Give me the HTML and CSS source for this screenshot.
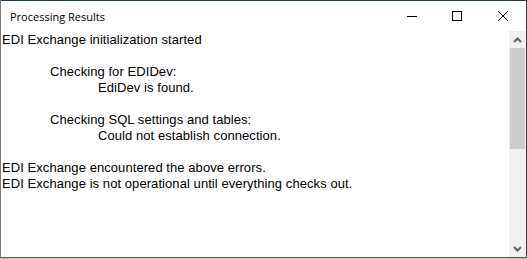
FILE: index.html
```html
<!DOCTYPE html>
<html lang="en">
<head>
  <meta charset="UTF-8">
  <title>Processing Results</title>
  <link rel="stylesheet" href="styles.css">
</head>
<body>

  <div class="window">
    <div class="title-bar">
      <div class="title">Processing Results</div>
      <div class="controls">
        <div class="control">
          <svg width="10" height="10" viewBox="0 0 10 10"><path d="M0 5.5H10" stroke="#000" stroke-width="1"/></svg>
        </div>
        <div class="control">
          <svg width="10" height="10" viewBox="0 0 10 10"><rect x="0.5" y="0.5" width="9" height="9" fill="none" stroke="#000" stroke-width="1"/></svg>
        </div>
        <div class="control">
          <svg width="10" height="10" viewBox="0 0 10 10"><path d="M0 0L10 10M10 0L0 10" stroke="#000" stroke-width="1"/></svg>
        </div>
      </div>
    </div>

    <div class="content">
      <div class="results">
        <div class="line">EDI Exchange initialization started</div>
        <div class="line">&nbsp;</div>
        <div class="line indent-1">Checking for EDIDev:</div>
        <div class="line indent-2">EdiDev is found.</div>
        <div class="line">&nbsp;</div>
        <div class="line indent-1">Checking SQL settings and tables:</div>
        <div class="line indent-2">Could not establish connection.</div>
        <div class="line">&nbsp;</div>
        <div class="line">EDI Exchange encountered the above errors.</div>
        <div class="line">EDI Exchange is not operational until everything checks out.</div>
      </div>

      <div class="scrollbar">
        <div class="arrow">
          <svg width="9" height="6" viewBox="0 0 9 6"><path d="M1 5L4.5 1.5L8 5" fill="none" stroke="#606060" stroke-width="2"/></svg>
        </div>
        <div class="track">
          <div class="thumb"></div>
        </div>
        <div class="arrow">
          <svg width="9" height="6" viewBox="0 0 9 6"><path d="M1 1L4.5 4.5L8 1" fill="none" stroke="#606060" stroke-width="2"/></svg>
        </div>
      </div>
    </div>
  </div>

</body>
</html>
```

FILE: styles.css
```css
body {
  margin: 0;
  background-color: #c8c8c8;
  font-family: "Liberation Sans", Arial, sans-serif;
}

.window {
  width: 525px;
  height: 257px;
  display: flex;
  flex-direction: column;
  background-color: white;
  border-left: 1px solid #7a7a7a;
  border-right: 1px solid #3c3c3c;
  border-bottom: 1px solid #555;
}

.title-bar {
  height: 31px;
  display: flex;
  align-items: center;
  justify-content: space-between;
  border-top: 1px solid #1f3b57;
  box-sizing: border-box;
}

.title {
  font-family: "Open Sans", "Noto Sans", sans-serif;
  font-size: 11px;
  color: #000;
  padding-left: 9px;
}

.controls {
  display: flex;
  height: 100%;
}

.control {
  width: 46px;
  display: flex;
  align-items: center;
  justify-content: center;
}

.controls .control:first-child {
  margin-right: -1px;
}

.content {
  flex: 1;
  display: flex;
  min-height: 0;
}

.results {
  flex: 1;
  padding: 1px 0 0 1px;
  font-size: 13px;
  line-height: 16px;
  letter-spacing: 0.07px;
  color: #000;
}

.line {
  white-space: nowrap;
}

.indent-1 {
  padding-left: 48px;
}

.indent-2 {
  padding-left: 96px;
}

.scrollbar {
  width: 17px;
  display: flex;
  flex-direction: column;
  background-color: #f0f0f0;
}

.arrow {
  height: 17px;
  display: flex;
  align-items: center;
  justify-content: center;
}

.track {
  flex: 1;
}

.thumb {
  height: 101px;
  background-color: #cdcdcd;
  margin: 0 1px;
}
```
